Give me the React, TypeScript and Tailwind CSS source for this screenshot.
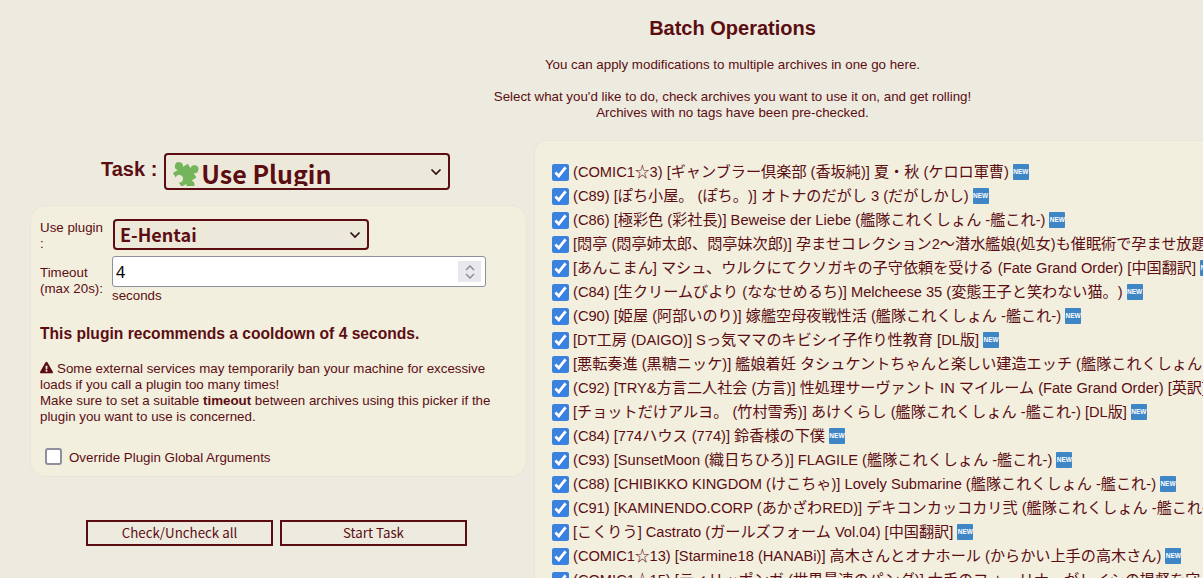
import { Fragment } from 'react';
import { FaExclamationTriangle } from 'react-icons/fa';

const archives = [
  '(COMIC1☆3) [ギャンブラー倶楽部 (香坂純)] 夏・秋 (ケロロ軍曹)',
  '(C89) [ぽち小屋。 (ぽち。)] オトナのだがし 3 (だがしかし)',
  '(C86) [極彩色 (彩社長)] Beweise der Liebe (艦隊これくしょん -艦これ-)',
  '[悶亭 (悶亭姉太郎、悶亭妹次郎)] 孕ませコレクション2〜潜水艦娘(処女)も催眠術で孕ませ放題〜 (艦隊これくしょん -艦これ-)',
  '[あんこまん] マシュ、ウルクにてクソガキの子守依頼を受ける (Fate Grand Order) [中国翻訳]',
  '(C84) [生クリームびより (ななせめるち)] Melcheese 35 (変態王子と笑わない猫。)',
  '(C90) [姫屋 (阿部いのり)] 嫁艦空母夜戦性活 (艦隊これくしょん -艦これ-)',
  '[DT工房 (DAIGO)] Sっ気ママのキビシイ子作り性教育 [DL版]',
  '[悪転奏進 (黒糖ニッケ)] 艦娘着妊 タシュケントちゃんと楽しい建造エッチ (艦隊これくしょん -艦これ-)',
  '(C92) [TRY&方言二人社会 (方言)] 性処理サーヴァント IN マイルーム (Fate Grand Order) [英訳]',
  '[チョットだけアルヨ。 (竹村雪秀)] あけくらし (艦隊これくしょん -艦これ-) [DL版]',
  '(C84) [774ハウス (774)] 鈴香様の下僕',
  '(C93) [SunsetMoon (織日ちひろ)] FLAGILE (艦隊これくしょん -艦これ-)',
  '(C88) [CHIBIKKO KINGDOM (けこちゃ)] Lovely Submarine (艦隊これくしょん -艦これ-)',
  '(C91) [KAMINENDO.CORP (あかざわRED)] デキコンカッコカリ弐 (艦隊これくしょん -艦これ-)',
  '[こくりう] Castrato (ガールズフォーム Vol.04) [中国翻訳]',
  '(COMIC1☆13) [Starmine18 (HANABi)] 高木さんとオナホール (からかい上手の高木さん)',
  '(COMIC1☆15) [ティリッポンガ (世界最速のパンダ)] 大手のフォーリナーがレイシの提督を守る',
];

// the CJK runs sit a little larger than the latin text around them
const splitRuns = (title: string) => title.split(/([\u3000-\u9fff\uff00-\uffef]+)/);

const Chevron = () => (
  <svg width="12" height="8" viewBox="0 0 12 8" fill="none" stroke="#2b1012" strokeWidth="1.7">
    <path d="M1.5 1.5 6 6l4.5-4.5" />
  </svg>
);

const Puzzle = () => (
  <svg width="30" height="30" viewBox="0 0 24 24" className="mr-[2px] mt-[3px] shrink-0">
    <path
      fill="#74b45a"
      transform="rotate(-32 12 13)"
      d="M5 7.5H9.7a3.2 3.2 0 1 1 4.6 0H19V11.7a3.2 3.2 0 1 1 0 4.6V20.5H14.3a3.2 3.2 0 1 1 -4.6 0H5V16.3a3 3 0 1 0 0 -4.6Z"
    />
  </svg>
);

const NewBadge = () => (
  <span className="ml-[4px] inline-flex h-4 w-4 shrink-0 items-center justify-center rounded-[1px] bg-[#3f86c6] text-[6.5px] font-bold leading-none text-white">
    NEW
  </span>
);

export default function App() {
  return (
    <div className="h-[578px] w-[1203px] overflow-hidden bg-[#edebdf] font-['Liberation_Sans','Noto_Sans_CJK_JP',sans-serif] text-[13.33px] text-[#5c0d12]">
      <div className="ml-[262px] pt-[16px] text-center">
        <h1 className="text-[20px] font-bold leading-[24px]">Batch Operations</h1>
        <p className="mt-[17px] leading-[16px]">You can apply modifications to multiple archives in one go here.</p>
        <p className="mt-[16px] leading-[16px]">
          Select what you'd like to do, check archives you want to use it on, and get rolling!
          <br />
          Archives with no tags have been pre-checked.
        </p>
      </div>

      <div className="mt-[19px] flex items-start">
        <div className="ml-[30px] w-[497px] shrink-0">
          <div className="mt-[13px] flex items-start pl-[71px]">
            <span className="mt-[3px] text-[20px] font-bold leading-[26px]">Task :</span>
            <div className="ml-[7px] flex h-[37px] w-[286px] items-start justify-between overflow-hidden rounded-[4px] border-2 border-[#5c0d12] bg-[#ece9da] pl-[3px] pr-[6px]">
              <span className="flex h-[31px] items-start overflow-hidden font-['Noto_Sans_CJK_JP',sans-serif] text-[25px] font-bold leading-[36px]">
                <Puzzle />
                Use Plugin
              </span>
              <span className="mt-[13px]">
                <Chevron />
              </span>
            </div>
          </div>

          <div className="mt-[15px] h-[272px] rounded-[16px] border border-[#e9e6d8] bg-[#f2efdf] pl-[9px] pr-[14px] pt-[14px]">
            <div className="flex items-start">
              <span className="mr-[8px] w-[64px] shrink-0 leading-[16px]">Use plugin :</span>
              <div className="-mt-[1px] ml-[1px] flex h-[31px] w-[256px] items-center justify-between rounded-[4px] border-2 border-[#5c0d12] bg-[#ece9da] pl-[5px] pr-[6px]">
                <span className="font-['Noto_Sans_CJK_JP',sans-serif] text-[18px] font-bold">E-Hentai</span>
                <Chevron />
              </div>
            </div>
            <div className="mt-[4px] flex items-start">
              <span className="mt-[9px] w-[72px] shrink-0 leading-[16px]">
                Timeout
                <br />
                (max 20s):
              </span>
              <div>
                <div className="relative">
                  <input
                    readOnly
                    type="text"
                    value="4"
                    className="block h-[31px] w-[374px] rounded-[3px] border border-[#8f8f9d] bg-white pl-[3px] font-['Noto_Sans',sans-serif] text-[16px] text-black outline-none"
                  />
                  <span className="absolute right-[5px] top-[5px] flex h-[21px] w-[23px] flex-col items-center justify-center gap-[2px] bg-[#e9e9ed]">
                    <svg width="10" height="6" viewBox="0 0 10 6" fill="none" stroke="#8a8a94" strokeWidth="1.4">
                      <path d="M1 5 5 1l4 4" />
                    </svg>
                    <svg width="10" height="6" viewBox="0 0 10 6" fill="none" stroke="#8a8a94" strokeWidth="1.4">
                      <path d="M1 1l4 4 4-4" />
                    </svg>
                  </span>
                </div>
                <span className="mt-[1px] block leading-[16px]">seconds</span>
              </div>
            </div>

            <p className="mt-[21px] text-[15.63px] font-bold leading-[18px]">This plugin recommends a cooldown of 4 seconds.</p>

            <p className="mt-[18px] leading-[16px]">
              <FaExclamationTriangle className="mr-[4px] inline align-[-1px]" size={13} />
              Some external services may temporarily ban your machine for excessive loads if you call a plugin too many times!
              <br />
              Make sure to set a suitable <b>timeout</b> between archives using this picker if the plugin you want to use is concerned.
            </p>

            <label className="mt-[23px] flex items-start pl-[5px]">
              <span className="h-[17px] w-[17px] rounded-[3px] border-2 border-[#8f8f9d] bg-white" />
              <span className="ml-[7px] mt-[2px] leading-[16px]">Override Plugin Global Arguments</span>
            </label>
          </div>

          <div className="ml-[56px] mt-[43px] flex gap-[7px] font-['Noto_Sans_CJK_JP',sans-serif] text-[13.33px]">
            <button className="h-[26px] w-[187px] border-2 border-[#5c0d12] leading-[20px]">Check/Uncheck all</button>
            <button className="h-[26px] w-[187px] border-2 border-[#5c0d12] leading-[20px]">Start Task</button>
          </div>
        </div>

        <div className="ml-[7px] w-[900px] shrink-0 rounded-[12px] border border-[#e9e6d8] bg-[#f2efdf] pl-[17px] pt-[19px] [text-spacing-trim:space-all]">
          {archives.map((title) => (
            <label key={title} className="flex h-[24px] items-center whitespace-nowrap text-[14.67px]">
              <input readOnly checked type="checkbox" className="h-[17px] w-[17px] shrink-0 accent-[#3b82e0]" />
              <span className="ml-[4px]">
                {splitRuns(title).map((run, i) =>
                  i % 2 ? (
                    <span key={i} className="text-[15.15px]">
                      {run}
                    </span>
                  ) : (
                    <Fragment key={i}>{run}</Fragment>
                  )
                )}
              </span>
              <NewBadge />
            </label>
          ))}
        </div>
      </div>
    </div>
  );
}
